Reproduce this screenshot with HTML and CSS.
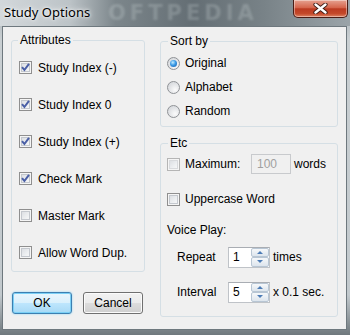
FILE: index.html
```html
<!DOCTYPE html>
<html lang="en">
<head>
  <meta charset="UTF-8" />
  <title>Study Options</title>
  <link rel="stylesheet" href="styles.css">
</head>
<body>
  <div class="window">
    <div class="titlebar">
      <span class="title">Study Options</span>
      <span class="watermark">OFTPEDIA</span>
      <div class="close">
        <svg width="15" height="11" viewBox="0 0 15 11">
          <path d="M2.5 1.5 L12.5 9.5 M12.5 1.5 L2.5 9.5" stroke="#3a1a14" stroke-width="4.2" stroke-linecap="round"/>
          <path d="M2.5 1.5 L12.5 9.5 M12.5 1.5 L2.5 9.5" stroke="#ffffff" stroke-width="2.4" stroke-linecap="round"/>
        </svg>
      </div>
    </div>

    <div class="client">
      <div class="col-left">
        <fieldset class="group attrs">
          <legend>Attributes</legend>
          <label class="row"><span class="cb"><svg viewBox="0 0 11 11"><polyline points="2,5.2 4.4,8 9,1.8" /></svg></span>Study Index (-)</label>
          <label class="row"><span class="cb"><svg viewBox="0 0 11 11"><polyline points="2,5.2 4.4,8 9,1.8" /></svg></span>Study Index 0</label>
          <label class="row"><span class="cb"><svg viewBox="0 0 11 11"><polyline points="2,5.2 4.4,8 9,1.8" /></svg></span>Study Index (+)</label>
          <label class="row"><span class="cb"><svg viewBox="0 0 11 11"><polyline points="2,5.2 4.4,8 9,1.8" /></svg></span>Check Mark</label>
          <label class="row"><span class="cb"></span>Master Mark</label>
          <label class="row"><span class="cb"></span>Allow Word Dup.</label>
        </fieldset>
        <div class="buttons">
          <button class="btn default">OK</button>
          <button class="btn">Cancel</button>
        </div>
      </div>

      <div class="col-right">
        <fieldset class="group sort">
          <legend>Sort by</legend>
          <label class="radio-row"><span class="rb checked"><span class="dot"></span></span>Original</label>
          <label class="radio-row"><span class="rb"></span>Alphabet</label>
          <label class="radio-row"><span class="rb"></span>Random</label>
        </fieldset>

        <fieldset class="group etc">
          <legend>Etc</legend>
          <div class="max-row">
            <span class="cb disabled"></span>
            <span class="max-label">Maximum:</span>
            <span class="field">100</span>
            <span class="after">words</span>
          </div>
          <label class="upper-row"><span class="cb"></span>Uppercase Word</label>
          <div class="voice">Voice Play:</div>
          <div class="spin-row first">
            <span class="spin-label">Repeat</span>
            <div class="spin">
              <span class="spin-val">1</span>
              <div class="spin-btns">
                <span class="arrow up"></span>
                <span class="arrow down"></span>
              </div>
            </div>
            <span class="after">times</span>
          </div>
          <div class="spin-row">
            <span class="spin-label">Interval</span>
            <div class="spin">
              <span class="spin-val">5</span>
              <div class="spin-btns">
                <span class="arrow up"></span>
                <span class="arrow down"></span>
              </div>
            </div>
            <span class="after">x 0.1 sec.</span>
          </div>
        </fieldset>
      </div>
    </div>
  </div>
</body>
</html>
```

FILE: styles.css
```css
body {
  margin: 0;
  width: 350px;
  height: 335px;
  overflow: hidden;
  font-family: "Liberation Sans", Arial, sans-serif;
  font-size: 12px;
  color: #000;
  background: linear-gradient(to bottom, #a4adb2 0, #c9cfd2 12%, #c2c9cd 88%, #6f787d 100%);
}

.window {
  display: flex;
  flex-direction: column;
  height: 335px;
}

/* title bar */
.titlebar {
  position: relative;
  height: 26px;
  display: flex;
  align-items: flex-start;
  background: linear-gradient(to right, #d3d8db 0, #bcc3c7 20%, #7c868b 33%, #646e74 55%, #788287 75%, #9ba4a9 100%);
}

.title {
  position: relative;
  z-index: 1;
  padding-left: 4px;
  font-family: "Noto Sans", sans-serif;
  font-size: 13px;
  line-height: 24px;
  text-shadow: 0 0 6px #fff, 0 0 3px #fff;
}

.watermark {
  position: absolute;
  left: 108px;
  top: 1px;
  font-family: "DejaVu Sans", sans-serif;
  font-weight: bold;
  font-size: 21px;
  line-height: 24px;
  letter-spacing: 4px;
  color: rgba(225, 230, 233, 0.22);
  filter: blur(1.2px);
}

.close {
  position: relative;
  z-index: 1;
  margin-left: auto;
  margin-right: 2px;
  width: 55px;
  height: 18px;
  box-sizing: border-box;
  border: 1px solid #4a1d16;
  border-top: none;
  border-radius: 0 0 5px 5px;
  background: linear-gradient(#e6a291 0, #d5654c 45%, #bb3a21 52%, #c4492a 80%, #dd8465 100%);
  box-shadow: inset 0 0 0 1px rgba(255, 255, 255, 0.4);
  display: flex;
  align-items: center;
  justify-content: center;
}

.close svg {
  display: block;
}

/* client area */
.client {
  flex: 1;
  margin: 0 3px 5px 2px;
  padding: 6px 7px 0 8px;
  border: 1px solid #6e787e;
  background: #f0f0f0;
  display: flex;
  gap: 15px;
}

.col-left {
  width: 134px;
}

.col-right {
  width: 178px;
  margin-top: 1px;
}

.group {
  margin: 0;
  min-width: 0;
  border: 1px solid #d5dfe5;
  border-radius: 3px;
}

.group legend {
  padding: 0 2px;
  line-height: 14px;
}

.attrs {
  padding: 2px 0 0 7px;
}

.attrs legend {
  margin-left: -1px;
}

.row {
  height: 37px;
  display: flex;
  align-items: center;
  gap: 6px;
}

/* checkbox */
.cb {
  width: 13px;
  height: 13px;
  box-sizing: border-box;
  border: 1px solid #8f8f8f;
  background: linear-gradient(135deg, #d5d8dd 0, #eef0f2 60%, #fbfbfb 100%);
  box-shadow: inset 0 0 0 1px #f5f5f5, inset 0 0 0 2px #c4c8ce;
  flex-shrink: 0;
}

.cb svg {
  display: block;
  width: 11px;
  height: 11px;
}

.cb polyline {
  fill: none;
  stroke: #4a5fa6;
  stroke-width: 2;
}

.cb.disabled {
  border-color: #b5b5b5;
  box-shadow: inset 0 0 0 1px #f5f5f5, inset 0 0 0 2px #d8dadd;
}

/* radios */
.sort {
  padding: 3px 0 3px 6px;
}

.sort legend,
.etc legend {
  margin-left: 1px;
}

.radio-row {
  height: 24px;
  display: flex;
  align-items: center;
  gap: 5px;
}

.rb {
  width: 13px;
  height: 13px;
  box-sizing: border-box;
  border: 1px solid #8f9296;
  border-radius: 50%;
  background: radial-gradient(circle at 65% 70%, #fbfbfb 0, #dfe1e4 60%, #cfd2d6 100%);
  display: flex;
  align-items: center;
  justify-content: center;
}

.rb .dot {
  width: 7px;
  height: 7px;
  border-radius: 50%;
  background: radial-gradient(circle at 40% 35%, #c4ecff 0, #3a9ae6 45%, #1859a4 100%);
}

/* etc */
.etc {
  margin-top: 9px;
  padding: 0 0 13px 6px;
}

.max-row {
  margin-top: 3px;
  height: 22px;
  display: flex;
  align-items: center;
}

.max-label {
  width: 66px;
  margin-left: 5px;
}

.field {
  width: 40px;
  height: 20px;
  box-sizing: border-box;
  border: 1px solid #c8cacd;
  padding-left: 5px;
  line-height: 18px;
  color: #a0a0a0;
}

.after {
  margin-left: 3px;
}

.upper-row {
  margin-top: 13px;
  height: 22px;
  display: flex;
  align-items: center;
  gap: 5px;
}

.voice {
  margin-top: 12px;
  line-height: 16px;
}

.spin-row {
  margin-top: 13px;
  padding-left: 10px;
  height: 22px;
  display: flex;
  align-items: center;
}

.spin-row.first {
  margin-top: 8px;
}

.spin-label {
  width: 51px;
}

.spin {
  width: 42px;
  height: 21px;
  box-sizing: border-box;
  border: 1px solid #bfc3c8;
  border-top-color: #a9adb3;
  background: #fff;
  display: flex;
}

.spin-val {
  flex: 1;
  padding-left: 4px;
  line-height: 19px;
}

.spin-btns {
  width: 18px;
  display: flex;
  flex-direction: column;
}

.arrow {
  flex: 1;
  box-sizing: border-box;
  border: 1px solid #b8c6d4;
  border-radius: 2px;
  background: linear-gradient(#f6f8fa, #dde5ed);
  display: flex;
  align-items: center;
  justify-content: center;
}

.arrow::after {
  content: "";
  border-left: 3px solid transparent;
  border-right: 3px solid transparent;
}

.arrow.up::after {
  border-bottom: 3px solid #4d7cb6;
}

.arrow.down::after {
  border-top: 3px solid #4d7cb6;
}

/* buttons */
.buttons {
  margin: 20px 0 0 1px;
  display: flex;
  gap: 11px;
}

.btn {
  width: 60px;
  height: 22px;
  padding: 0;
  font-family: "Liberation Sans", Arial, sans-serif;
  font-size: 12px;
  color: #000;
  border: 1px solid #707070;
  border-radius: 3px;
  background: linear-gradient(#f2f2f2 0, #ebebeb 50%, #dddddd 50%, #cfcfcf 100%);
  box-shadow: inset 0 0 0 1px #fbfbfb;
}

.btn.default {
  border-color: #3c7fb1;
  background: linear-gradient(#e9f6fd 0, #d9f0fc 50%, #bee6fd 50%, #a7d9f5 100%);
  box-shadow: inset 0 0 0 1px #7ad0f6, 0 0 2px #7ad0f6;
}
```
